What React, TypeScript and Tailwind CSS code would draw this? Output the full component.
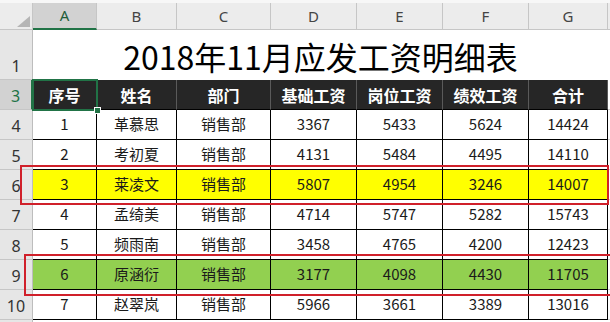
const colHeads = [
  { key: "A", w: "w-[64px]" },
  { key: "B", w: "w-[80px]" },
  { key: "C", w: "w-[94px]" },
  { key: "D", w: "w-[86px]" },
  { key: "E", w: "w-[86px]" },
  { key: "F", w: "w-[86px]" },
  { key: "G", w: "w-[79px]" },
];

const titles = ["序号", "姓名", "部门", "基础工资", "岗位工资", "绩效工资", "合计"];

const rows = [
  { n: 4, bg: "", cells: ["1", "革慕思", "销售部", "3367", "5433", "5624", "14424"] },
  { n: 5, bg: "", cells: ["2", "考初夏", "销售部", "4131", "5484", "4495", "14110"] },
  { n: 6, bg: "bg-[#ffff00]", cells: ["3", "莱凌文", "销售部", "5807", "4954", "3246", "14007"] },
  { n: 7, bg: "", cells: ["4", "孟绮美", "销售部", "4714", "5747", "5282", "15743"] },
  { n: 8, bg: "", cells: ["5", "频雨南", "销售部", "3458", "4765", "4200", "12423"] },
  { n: 9, bg: "bg-[#92d050]", cells: ["6", "原涵衍", "销售部", "3177", "4098", "4430", "11705"] },
  { n: 10, bg: "", cells: ["7", "赵翠岚", "销售部", "5966", "3661", "3389", "13016"] },
];

function RowHead({ n, active }: { n: number; active?: boolean }) {
  return (
    <div
      className={`w-[33px] shrink-0 flex items-end justify-center pb-[1px] text-[16px] font-['Noto_Sans',sans-serif] border-b border-[#c6c6c6] ${
        active
          ? "bg-[#d2d2d2] text-[#217346] border-r-2 border-r-[#217346]"
          : "bg-[#e6e6e6] text-[#333] border-r border-r-[#bdbdbd]"
      }`}
    >
      {n}
    </div>
  );
}

export default function App() {
  return (
    <div className="relative w-[610px] h-[322px] overflow-hidden bg-white font-['Noto_Sans_CJK_SC',sans-serif] text-[#1a1a1a]">
      {/* column letters */}
      <div className="flex h-[30px] bg-[#ececec] border-t-[3px] border-t-[#f7f7f7]">
        <div className="relative w-[33px] shrink-0 border-r border-b border-[#c6c6c6]">
          <svg className="absolute left-[17px] top-[13px]" width="13" height="11" viewBox="0 0 13 11">
            <polygon points="13,0 13,11 0,11" fill="#b5b5b5" />
          </svg>
        </div>
        {colHeads.map((c, i) => (
          <div
            key={c.key}
            className={`${c.w} shrink-0 flex items-center justify-center text-[15px] font-['Noto_Sans',sans-serif] border-r border-[#c6c6c6] ${
              i === 0
                ? "bg-[#d2d2d2] text-[#1f5e3a] border-b-2 border-b-[#217346]"
                : "text-[#444] border-b border-b-[#c6c6c6]"
            }`}
          >
            {c.key}
          </div>
        ))}
        <div className="flex-1 border-b border-[#c6c6c6]" />
      </div>

      {/* title row */}
      <div className="flex h-[50px]">
        <RowHead n={1} />
        <div className="w-[575px] shrink-0 flex items-center justify-center text-[32px] text-black pt-[2px]">
          2018年11月应发工资明细表
        </div>
      </div>

      {/* header row */}
      <div className="flex h-[30px]">
        <RowHead n={3} active />
        {titles.map((t, i) => (
          <div
            key={t}
            className={`${colHeads[i].w} shrink-0 flex items-center justify-center bg-[#262626] text-white text-[16px] font-bold border-r border-r-[#5a5a5a] border-b border-b-black`}
          >
            {t}
          </div>
        ))}
        <div className="flex-1 border-b border-[#d4d4d4]" />
      </div>

      {/* data rows */}
      {rows.map((r) => (
        <div key={r.n} className="flex h-[30px]">
          <RowHead n={r.n} />
          {r.cells.map((v, i) => (
            <div
              key={i}
              className={`${colHeads[i].w} ${r.bg} shrink-0 flex items-center justify-center text-[15px] border-r border-b border-black`}
            >
              {v}
            </div>
          ))}
          <div className="flex-1 border-b border-[#d4d4d4]" />
        </div>
      ))}
      <div className="flex h-[30px]">
        <div className="w-[33px] shrink-0 bg-[#e6e6e6] border-r border-[#bdbdbd]" />
      </div>

      {/* selected cell A3 */}
      <div className="absolute left-[32px] top-[79px] w-[66px] h-[32px] border-2 border-[#217346]" />
      <div className="absolute left-[94px] top-[107px] w-[7px] h-[7px] bg-[#217346] border border-white" />

      {/* red highlight boxes */}
      <div className="absolute left-[20px] top-[165px] w-[589px] h-[40px] border-2 border-[#d0202a]" />
      <div className="absolute left-[24px] top-[254px] w-[600px] h-[42px] border-2 border-[#d0202a]" />
    </div>
  );
}
